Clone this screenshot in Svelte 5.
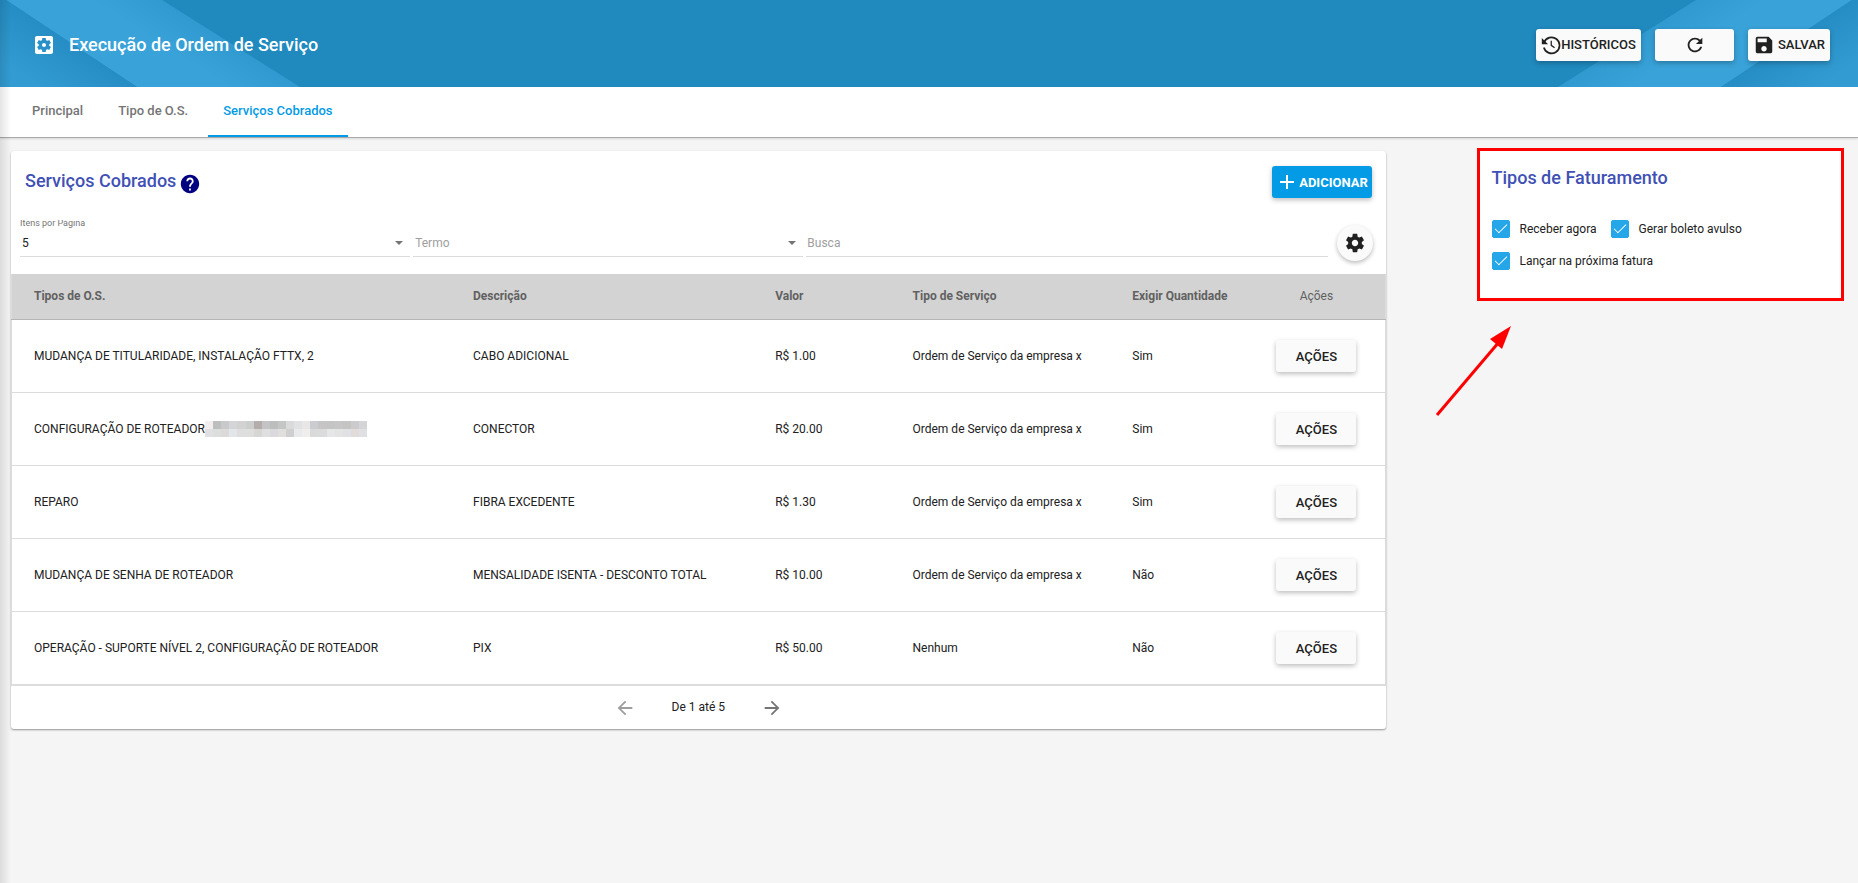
<script>
  const icons = {
    app: 'M12 10c-1.1 0-2 .9-2 2s.9 2 2 2 2-.9 2-2-.9-2-2-2zm7-7H5c-1.11 0-2 .9-2 2v14c0 1.1.89 2 2 2h14c1.11 0 2-.9 2-2V5c0-1.1-.89-2-2-2zm-1.75 9c0 .23-.02.46-.05.68l1.48 1.16c.13.11.17.3.08.45l-1.4 2.42c-.09.15-.27.21-.43.15l-1.74-.7c-.36.28-.76.51-1.18.69l-.26 1.85c-.03.17-.18.3-.35.3h-2.8c-.17 0-.32-.13-.35-.29l-.26-1.85c-.43-.18-.82-.41-1.18-.69l-1.74.7c-.16.06-.34 0-.43-.15l-1.4-2.42c-.09-.15-.05-.34.08-.45l1.48-1.16c-.03-.23-.05-.46-.05-.69 0-.23.02-.46.05-.68l-1.48-1.16c-.13-.11-.17-.3-.08-.45l1.4-2.42c.09-.15.27-.21.43-.15l1.74.7c.36-.28.76-.51 1.18-.69l.26-1.85c.03-.17.18-.3.35-.3h2.8c.17 0 .32.13.35.29l.26 1.85c.43.18.82.41 1.18.69l1.74-.7c.16-.06.34 0 .43.15l1.4 2.42c.09.15.05.34-.08.45l-1.48 1.16c.03.23.05.46.05.69z',
    refresh: 'M17.65 6.35C16.2 4.9 14.21 4 12 4c-4.42 0-7.99 3.58-7.99 8s3.57 8 7.99 8c3.73 0 6.84-2.55 7.73-6h-2.08c-.82 2.33-3.04 4-5.65 4-3.31 0-6-2.69-6-6s2.69-6 6-6c1.66 0 3.14.69 4.22 1.78L13 11h7V4l-2.35 2.35z',
    save: 'M17 3H5c-1.11 0-2 .9-2 2v14c0 1.1.89 2 2 2h14c1.1 0 2-.9 2-2V7l-4-4zm-5 16c-1.66 0-3-1.34-3-3s1.34-3 3-3 3 1.34 3 3-1.34 3-3 3zm3-10H5V5h10v4z',
    help: 'M12 2C6.48 2 2 6.48 2 12s4.48 10 10 10 10-4.48 10-10S17.52 2 12 2zm1 17h-2v-2h2v2zm2.07-7.75l-.9.92C13.45 12.9 13 13.5 13 15h-2v-.5c0-1.1.45-2.1 1.17-2.83l1.24-1.26c.37-.36.59-.86.59-1.41 0-1.1-.9-2-2-2s-2 .9-2 2H8c0-2.21 1.79-4 4-4s4 1.79 4 4c0 .88-.36 1.68-.93 2.25z',
    add: 'M19 13h-6v6h-2v-6H5v-2h6V5h2v6h6v2z',
    gear: 'M19.43 12.98c.04-.32.07-.64.07-.98s-.03-.66-.07-.98l2.11-1.65c.19-.15.24-.42.12-.64l-2-3.46c-.12-.22-.39-.3-.61-.22l-2.49 1c-.52-.4-1.08-.73-1.69-.98l-.38-2.65C14.46 2.18 14.25 2 14 2h-4c-.25 0-.46.18-.49.42l-.38 2.65c-.61.25-1.17.59-1.69.98l-2.49-1c-.23-.09-.49 0-.61.22l-2 3.46c-.13.22-.07.49.12.64l2.11 1.65c-.04.32-.07.65-.07.98s.03.66.07.98l-2.11 1.65c-.19.15-.24.42-.12.64l2 3.46c.12.22.39.3.61.22l2.49-1c.52.4 1.08.73 1.69.98l.38 2.65c.03.24.24.42.49.42h4c.25 0 .46-.18.49-.42l.38-2.65c.61-.25 1.17-.59 1.69-.98l2.49 1c.23.09.49 0 .61-.22l2-3.46c.12-.22.07-.49-.12-.64l-2.11-1.65zM12 15.5c-1.93 0-3.5-1.57-3.5-3.5s1.57-3.5 3.5-3.5 3.5 1.57 3.5 3.5-1.57 3.5-3.5 3.5z',
    back: 'M20 11H7.83l5.59-5.59L12 4l-8 8 8 8 1.41-1.41L7.83 13H20v-2z',
    forward: 'M12 4l-1.41 1.41L16.17 11H4v2h12.17l-5.58 5.59L12 20l8-8z'
  };

  const tabs = ['Principal', 'Tipo de O.S.', 'Serviços Cobrados'];
  let activeTab = $state(2);

  let pageSize = $state('5');
  let term = $state('');
  let search = $state('');

  const columns = ['Tipos de O.S.', 'Descrição', 'Valor', 'Tipo de Serviço', 'Exigir Quantidade'];

  const rows = [
    { types: 'MUDANÇA DE TITULARIDADE, INSTALAÇÃO FTTX, 2', description: 'CABO ADICIONAL', value: 'R$ 1.00', service: 'Ordem de Serviço da empresa x', amount: 'Sim' },
    { types: 'CONFIGURAÇÃO DE ROTEADOR', masked: true, description: 'CONECTOR', value: 'R$ 20.00', service: 'Ordem de Serviço da empresa x', amount: 'Sim' },
    { types: 'REPARO', description: 'FIBRA EXCEDENTE', value: 'R$ 1.30', service: 'Ordem de Serviço da empresa x', amount: 'Sim' },
    { types: 'MUDANÇA DE SENHA DE ROTEADOR', description: 'MENSALIDADE ISENTA - DESCONTO TOTAL', value: 'R$ 10.00', service: 'Ordem de Serviço da empresa x', amount: 'Não' },
    { types: 'OPERAÇÃO - SUPORTE NÍVEL 2, CONFIGURAÇÃO DE ROTEADOR', description: 'PIX', value: 'R$ 50.00', service: 'Nenhum', amount: 'Não' }
  ];

  // Colours of the redaction mosaic, one array per line of cells.
  const mosaic = [
    ['#f3eeed', '#bdbfbe', '#c9c9cb', '#d3d5d7', '#d2d2d2', '#cccecd', '#b5adac', '#c4c4c6', '#bcbebd', '#c4c6c5', '#dadada', '#e0e2e5', '#e8e7e6', '#cbccd0', '#c6c4c5', '#c4c4c4', '#c6c6c6', '#c5c4c2', '#cbcbcd', '#d5d5d8'],
    ['#e0e0e2', '#dcdedd', '#dbdad8', '#e2e6e9', '#dedede', '#dededf', '#d8d6d4', '#dfdfe1', '#dadadd', '#e0dfde', '#cfcfcf', '#e8eaec', '#efeeec', '#dadadb', '#dbdbdb', '#e5e6e8', '#e3e3e3', '#dfe1e4', '#e1dcd9', '#dfe0e4']
  ];

  let billing = $state([
    { label: 'Receber agora', checked: true },
    { label: 'Gerar boleto avulso', checked: true },
    { label: 'Lançar na próxima fatura', checked: true }
  ]);
</script>

{#snippet icon(name, size)}
  <svg class="icon" width={size} height={size} viewBox="0 0 24 24" aria-hidden="true">
    <path d={icons[name]} />
  </svg>
{/snippet}

{#snippet ribbon(side)}
  <svg class="ribbon {side}" width="300" height="87" viewBox="0 0 300 87" aria-hidden="true">
    <defs>
      <linearGradient id="fold-{side}" gradientUnits="userSpaceOnUse" x1="72" y1="43" x2="42" y2="89">
        <stop offset="0" stop-color="#258dc3" />
        <stop offset="1" stop-color="#329bd1" />
      </linearGradient>
      <linearGradient id="band-{side}" gradientUnits="userSpaceOnUse" x1="231" y1="43" x2="210" y2="76">
        <stop offset="0" stop-color="#309ad0" />
        <stop offset="1" stop-color="#39a2d8" />
      </linearGradient>
    </defs>
    <path d="M6 0H162L300 87H137z" fill="url(#band-{side})" />
    <path d="M0 0H6L137 87H0z" fill="url(#fold-{side})" />
  </svg>
{/snippet}

<div class="page">
  <header class="topbar">
    {@render ribbon('left')}
    {@render ribbon('right')}
    <div class="topbar-content">
      {@render icon('app', 24)}
      <h1>Execução de Ordem de Serviço</h1>
      <div class="actions">
        <button class="btn history">
          <svg class="icon" width="20" height="20" viewBox="0 0 24 24" aria-hidden="true">
            <path d="M3.6 9.2A9.6 9.6 0 1 1 3.4 15" fill="none" stroke="currentColor" stroke-width="2" />
            <path d="M1 3.5V11h7.5z" />
            <path d="M12.3 7v5.4l4 3" fill="none" stroke="currentColor" stroke-width="1.5" />
          </svg>HISTÓRICOS
        </button>
        <button class="btn reload" aria-label="Atualizar">{@render icon('refresh', 22)}</button>
        <button class="btn save">{@render icon('save', 22)}SALVAR</button>
      </div>
    </div>
  </header>

  <nav class="tabs">
    {#each tabs as tab, i}
      <button class="tab" class:active={activeTab === i} onclick={() => (activeTab = i)}>{tab}</button>
    {/each}
  </nav>

  <main>
    <section class="card services">
      <div class="card-head">
        <h2>Serviços Cobrados</h2>
        <button class="help" aria-label="Ajuda">{@render icon('help', 22)}</button>
        <button class="btn primary">{@render icon('add', 24)}ADICIONAR</button>
      </div>

      <div class="filters">
        <div class="field">
          <label for="page-size">Itens por Página</label>
          <div class="control">
            <select id="page-size" bind:value={pageSize}>
              <option value="5">5</option>
              <option value="10">10</option>
              <option value="25">25</option>
            </select>
            <span class="caret"></span>
          </div>
        </div>
        <div class="field">
          <div class="control">
            <select class="empty" aria-label="Termo" bind:value={term}>
              <option value="">Termo</option>
            </select>
            <span class="caret"></span>
          </div>
        </div>
        <div class="field search">
          <div class="control">
            <input type="text" placeholder="Busca" aria-label="Busca" bind:value={search} />
          </div>
        </div>
        <button class="round" aria-label="Configurar colunas">{@render icon('gear', 22)}</button>
      </div>

      <table>
        <colgroup>
          <col class="c-types" />
          <col class="c-description" />
          <col class="c-value" />
          <col class="c-service" />
          <col class="c-amount" />
          <col />
        </colgroup>
        <thead>
          <tr>
            {#each columns as column}
              <th>{column}</th>
            {/each}
            <th class="last">Ações</th>
          </tr>
        </thead>
        <tbody>
          {#each rows as row}
            <tr>
              <td>
                <div class="types">
                  {row.types}
                  {#if row.masked}
                    <svg width="162" height="16" viewBox="0 0 160 16" preserveAspectRatio="none" shape-rendering="crispEdges" aria-hidden="true">
                      {#each mosaic as line, y}
                        {#each line as fill, x}
                          <rect x={x * 8} y={y * 8} width="8" height="8" {fill} />
                        {/each}
                      {/each}
                    </svg>
                  {/if}
                </div>
              </td>
              <td>{row.description}</td>
              <td>{row.value}</td>
              <td>{row.service}</td>
              <td>{row.amount}</td>
              <td class="last"><button class="btn row-action">AÇÕES</button></td>
            </tr>
          {/each}
        </tbody>
      </table>

      <footer class="pager">
        <button aria-label="Página anterior" disabled>{@render icon('back', 22)}</button>
        <span>De 1 até 5</span>
        <button aria-label="Próxima página">{@render icon('forward', 22)}</button>
      </footer>
    </section>

    <aside>
      <section class="billing">
        <h2>Tipos de Faturamento</h2>
        <div class="checks">
          {#each billing as item}
            <label><input type="checkbox" bind:checked={item.checked} />{item.label}</label>
          {/each}
        </div>
      </section>
      <svg class="arrow" width="78" height="92" viewBox="0 0 78 92" aria-hidden="true">
        <path d="M2 90L64 17" stroke="#f00" stroke-width="3" />
        <path d="M76 1L55 14L67 24z" fill="#f00" />
      </svg>
    </aside>
  </main>

  <div class="edge-shadow"></div>
</div>

<style>
  :global(body) {
    background: #f5f5f5;
  }

  .page {
    position: relative;
    min-height: 100vh;
    font-family: Roboto, sans-serif;
    font-size: 12px;
    color: #212121;
  }

  button,
  input,
  select {
    font: inherit;
    color: inherit;
  }

  button {
    border: none;
    background: none;
    padding: 0;
    cursor: pointer;
  }

  h1,
  h2 {
    margin: 0;
    font-size: 18px;
    font-weight: 500;
    line-height: 24px;
  }

  h2 {
    color: #3f51b5;
  }

  .icon {
    display: block;
    flex: none;
    fill: currentColor;
  }

  /* Top bar */

  .topbar {
    display: grid;
    height: 87px;
    background: #2089be;
  }

  .topbar > :global(*) {
    grid-area: 1 / 1;
  }

  .ribbon.right {
    justify-self: end;
    transform: scaleX(-1);
  }

  .topbar-content {
    display: flex;
    align-items: center;
    padding: 2px 28px 0 32px;
    color: #fff;
    z-index: 1;
  }

  h1 {
    margin-left: 13px;
  }

  .actions {
    display: flex;
    gap: 14px;
    margin-left: auto;
  }

  .btn {
    display: flex;
    align-items: center;
    justify-content: center;
    height: 32px;
    border-radius: 3px;
    background: #fafafa;
    color: #212121;
    font-size: 13px;
    font-weight: 500;
    box-shadow: 0 2px 5px rgba(0, 0, 0, 0.26);
  }

  .btn.history {
    width: 105px;
  }

  .btn.reload {
    width: 79px;
  }

  .btn.save {
    width: 82px;
    gap: 3px;
  }

  .btn.primary {
    width: 100px;
    margin-left: auto;
    background: #039be5;
    color: #fff;
    font-weight: 700;
  }

  .btn.row-action {
    width: 80px;
    margin: 0 auto;
  }

  /* Tabs */

  .tabs {
    display: flex;
    gap: 5px;
    height: 50px;
    padding-left: 17px;
    background: #fff;
    border-bottom: 1px solid #aaa;
    box-shadow: 0 1px 2px rgba(0, 0, 0, 0.12);
  }

  .tab {
    padding: 0 15px 2px;
    border-bottom: 2px solid transparent;
    font-size: 13px;
    font-weight: 500;
    color: #757575;
  }

  .tab.active {
    color: #039be5;
    border-bottom-color: #039be5;
  }

  /* Content */

  main {
    display: grid;
    grid-template-columns: 3fr 1fr;
    align-items: start;
    padding-top: 10px;
  }

  .card {
    margin: 3px 8px 0 11px;
    background: #fff;
    border-radius: 3px;
    box-shadow: 0 1px 2px rgba(0, 0, 0, 0.4);
  }

  .card-head {
    display: flex;
    align-items: center;
    height: 62px;
    padding: 0 14px;
  }

  .card-head h2 {
    padding-bottom: 2px;
  }

  .help {
    margin: 4px 0 0 3px;
    color: #000080;
  }

  .filters {
    display: flex;
    align-items: flex-end;
    gap: 3px;
    height: 61px;
    padding: 0 13px 0 9px;
  }

  .field {
    flex: 390 0 0;
    height: 56px;
    display: flex;
    flex-direction: column;
    justify-content: flex-end;
    padding-bottom: 17px;
    box-sizing: border-box;
  }

  .field.search {
    flex-grow: 521;
    margin-right: 6px;
  }

  .field label {
    height: 8px;
    overflow: hidden;
    font-size: 9px;
    line-height: 6px;
    color: #757575;
  }

  .control {
    display: flex;
    align-items: center;
    height: 26px;
    padding-top: 2px;
    border-bottom: 1px solid #dcdcdc;
  }

  .control select,
  .control input {
    flex: 1;
    min-width: 0;
    height: 24px;
    padding: 0 2px;
    border: none;
    outline: none;
    appearance: none;
    background: none;
  }

  .control input {
    padding: 0 1px;
  }

  .control select.empty,
  .control input::placeholder {
    color: #9e9e9e;
  }

  .caret {
    margin-right: 7px;
    border: 4px solid transparent;
    border-top-color: #757575;
    border-bottom: none;
  }

  .round {
    display: flex;
    align-items: center;
    justify-content: center;
    width: 36px;
    height: 36px;
    margin-bottom: 13px;
    border-radius: 50%;
    background: #fafafa;
    box-shadow: 0 2px 4px rgba(0, 0, 0, 0.26);
  }

  /* Table */

  table {
    width: 100%;
    table-layout: fixed;
    border-collapse: collapse;
    border: 1px solid #dcdcdc;
    border-top: none;
    border-bottom-width: 2px;
  }

  .c-types { width: 32%; }
  .c-description { width: 22%; }
  .c-value { width: 10%; }
  .c-service { width: 16%; }
  .c-amount { width: 11%; }

  th,
  td {
    padding: 0 0 0 22px;
    text-align: left;
    white-space: nowrap;
  }

  th {
    height: 43px;
    padding-bottom: 2px;
    background: #d3d3d3;
    border-bottom: 1px solid #b5b5b5;
    color: #616161;
    font-weight: 700;
  }

  td {
    height: 72px;
    border-top: 1px solid #dcdcdc;
  }

  tbody tr:first-child td {
    border-top: none;
  }

  .last {
    padding-left: 0;
    padding-right: 13px;
    text-align: center;
    font-weight: 400;
  }

  .types {
    display: flex;
    align-items: center;
  }

  .pager {
    display: flex;
    align-items: center;
    justify-content: center;
    gap: 36px;
    height: 43px;
  }

  .pager span {
    padding-bottom: 2px;
  }

  .pager button {
    color: #757575;
  }

  .pager button:disabled {
    color: #9e9e9e;
  }

  /* Billing types */

  aside {
    padding: 0 14px 0 41px;
  }

  .billing {
    margin-left: 42px;
    min-height: 147px;
    background: #fff;
    border: 3px solid #f00;
  }

  .billing h2 {
    padding: 15px 12px 0;
  }

  .checks {
    display: flex;
    flex-wrap: wrap;
    gap: 14px;
    padding: 30px 12px 0;
  }

  .checks label {
    display: flex;
    align-items: center;
    gap: 10px;
  }

  .checks input {
    display: flex;
    justify-content: center;
    width: 18px;
    height: 18px;
    margin: 0;
    border: 1px solid #bdbdbd;
    border-radius: 2px;
    appearance: none;
  }

  .checks input:checked {
    border-color: #25a6e8;
    background: #25a6e8;
  }

  .checks input:checked::before {
    content: '';
    width: 5px;
    height: 11px;
    border: solid #fff;
    border-width: 0 1px 1px 0;
    transform: rotate(45deg);
  }

  .arrow {
    display: block;
    margin-top: 24px;
  }

  .edge-shadow {
    position: absolute;
    inset: 0 auto 0 0;
    width: 11px;
    background: linear-gradient(to right, rgba(0, 0, 0, 0.1), transparent);
    pointer-events: none;
    z-index: 2;
  }
</style>
